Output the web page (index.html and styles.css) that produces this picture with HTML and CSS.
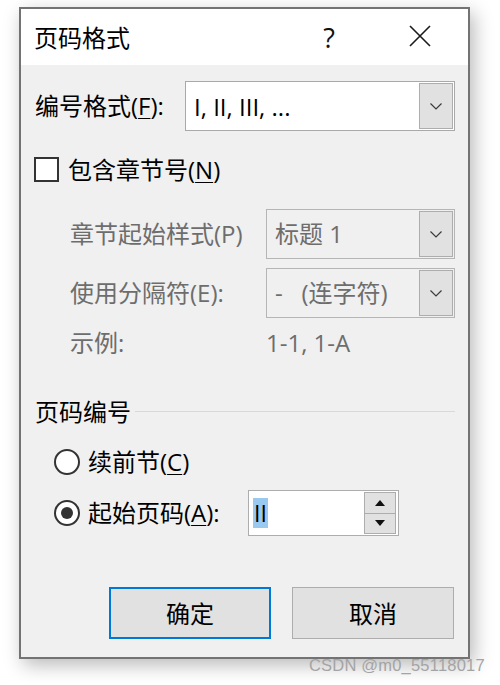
FILE: index.html
```html
<!DOCTYPE html>
<html lang="zh-CN">
<head>
<meta charset="utf-8">
<title>页码格式</title>
<link rel="stylesheet" href="styles.css">
</head>
<body>
<div class="dialog">
  <div class="titlebar">
    <span class="title">页码格式</span>
    <span class="help">?</span>
    <svg class="close" width="22" height="22" viewBox="0 0 22 22"><path d="M1 1 L21 21 M21 1 L1 21" stroke="#1a1a1a" stroke-width="1.6" fill="none"/></svg>
  </div>
  <div class="body">
    <div class="row row-format">
      <span class="label">编号格式(<u>F</u>):</span>
      <div class="select select-format">
        <span class="select-text">I, II, III, ...</span>
        <span class="select-btn"><svg width="12" height="7" viewBox="0 0 12 7"><path d="M0.5 0.5 L6 6 L11.5 0.5" stroke="#3a3a3a" stroke-width="1.2" fill="none"/></svg></span>
      </div>
    </div>
    <div class="row row-check">
      <span class="checkbox"></span>
      <span class="label">包含章节号(<u>N</u>)</span>
    </div>
    <div class="row row-sub row-style">
      <span class="label disabled">章节起始样式(P)</span>
      <div class="select select-sub">
        <span class="select-text disabled">标题 1</span>
        <span class="select-btn"><svg width="12" height="7" viewBox="0 0 12 7"><path d="M0.5 0.5 L6 6 L11.5 0.5" stroke="#3a3a3a" stroke-width="1.2" fill="none"/></svg></span>
      </div>
    </div>
    <div class="row row-sub row-sep">
      <span class="label disabled">使用分隔符(E):</span>
      <div class="select select-sub">
        <span class="select-text disabled">-&nbsp;&nbsp;&nbsp;(连字符)</span>
        <span class="select-btn"><svg width="12" height="7" viewBox="0 0 12 7"><path d="M0.5 0.5 L6 6 L11.5 0.5" stroke="#3a3a3a" stroke-width="1.2" fill="none"/></svg></span>
      </div>
    </div>
    <div class="row row-sub row-example">
      <span class="label example-label disabled">示例:</span>
      <span class="example disabled">1-1, 1-A</span>
    </div>
    <div class="row row-group">
      <span class="label">页码编号</span>
      <span class="group-line"></span>
    </div>
    <div class="row row-radio row-radio1">
      <span class="radio"></span>
      <span class="label">续前节(<u>C</u>)</span>
    </div>
    <div class="row row-radio row-radio2">
      <span class="radio checked"></span>
      <span class="label start-label">起始页码(<u>A</u>):</span>
      <div class="spin">
        <span class="spin-text"><span class="sel">II</span></span>
        <div class="spin-btns">
          <span class="spin-btn"><svg width="10" height="6" viewBox="0 0 10 6"><path d="M5 0 L10 6 L0 6 Z" fill="#111"/></svg></span>
          <span class="spin-btn"><svg width="10" height="6" viewBox="0 0 10 6"><path d="M0 0 L10 0 L5 6 Z" fill="#111"/></svg></span>
        </div>
      </div>
    </div>
    <div class="row row-buttons">
      <button class="btn btn-default">确定</button>
      <button class="btn">取消</button>
    </div>
  </div>
</div>
<div class="watermark">CSDN @m0_55118017</div>
</body>
</html>
```
FILE: styles.css
```css
html, body {
  margin: 0;
  padding: 0;
  background: #ffffff;
}
body {
  width: 500px;
  height: 685px;
  position: relative;
  overflow: hidden;
  font-family: "Open Sans", "Noto Sans CJK SC", sans-serif;
  font-size: 24px;
  color: #000;
}
.dialog {
  margin: 7px 0 0 19px;
  width: 451px;
  height: 652px;
  box-sizing: border-box;
  border: 2px solid #737373;
  background: #f0f0f0;
  box-shadow: 4px 6px 18px rgba(0,0,0,0.28);
  display: flex;
  flex-direction: column;
}
.titlebar {
  height: 56px;
  background: #fff;
  display: flex;
  align-items: center;
  padding-left: 13px;
  flex-shrink: 0;
}
.title {
  font-size: 24px;
  line-height: 1;
  margin-top: 1px;
}
.help {
  font-family: "Open Sans", sans-serif;
  font-size: 27px;
  line-height: 1;
  margin-left: auto;
  color: #111;
  margin-top: 1px;
}
.close {
  margin-left: 74px;
  margin-right: 37px;
  margin-top: -2px;
}
.body {
  display: flex;
  flex-direction: column;
  padding: 0 13px 0 13px;
}
.row {
  display: flex;
  align-items: center;
}
.label {
  line-height: 1;
  white-space: nowrap;
}
u {
  text-decoration-thickness: 1px;
  text-underline-offset: 3px;
}
.disabled {
  color: #6d6d6d;
}
.row-format {
  margin-top: 16px;
  height: 50px;
  padding-left: 1px;
}
.select {
  box-sizing: border-box;
  height: 50px;
  border: 1px solid #a9a9a9;
  background: #fff;
  display: flex;
  align-items: center;
  padding: 1px;
  margin-left: auto;
}
.select-format {
  width: 270px;
}
.select-text {
  flex: 1;
  padding-left: 7px;
  line-height: 1;
  white-space: nowrap;
}
.select-format .select-text {
  margin-top: 1px;
}
.select-btn {
  width: 34px;
  height: 46px;
  box-sizing: border-box;
  border: 1px solid #adadad;
  background: #e1e1e1;
  display: flex;
  align-items: center;
  justify-content: center;
}
.row-check {
  margin-top: 26px;
  height: 26px;
}
.checkbox {
  width: 25px;
  height: 25px;
  box-sizing: border-box;
  border: 2px solid #333;
  background: #fff;
  margin-right: 9px;
  margin-top: -2px;
}
.row-sub {
  padding-left: 36px;
}
.row-style {
  margin-top: 26px;
  height: 50px;
}
.row-sep {
  margin-top: 9px;
  height: 50px;
}
.select-sub {
  width: 189px;
  background: #f0f0f0;
  border-color: #b5b5b5;
}
.select-sub .select-text {
  padding-left: 7px;
}
.row-example {
  margin-top: 10px;
  height: 30px;
}
.example-label {
  width: 196px;
}
.example {
  line-height: 1;
}
.row-group {
  margin-top: 39px;
  height: 30px;
  padding-left: 1px;
}
.group-line {
  flex: 1;
  height: 1px;
  background: #d9d9d9;
  margin-left: 4px;
  margin-top: -2px;
}
.row-radio {
  padding-left: 20px;
}
.row-radio1 {
  margin-top: 22px;
  height: 26px;
}
.row-radio2 {
  margin-top: 15px;
  height: 46px;
}
.radio {
  width: 26px;
  height: 26px;
  box-sizing: border-box;
  border: 2px solid #333;
  border-radius: 50%;
  background: #fff;
  margin-right: 8px;
  display: flex;
  align-items: center;
  justify-content: center;
  flex-shrink: 0;
}
.radio.checked::after {
  content: "";
  width: 12px;
  height: 12px;
  border-radius: 50%;
  background: #333;
}
.start-label {
  width: 160px;
}
.spin {
  width: 151px;
  height: 46px;
  box-sizing: border-box;
  border: 1px solid #adadad;
  background: #fff;
  display: flex;
  padding: 1px 2px 1px 4px;
}
.spin-text {
  flex: 1;
  display: flex;
  align-items: center;
}
.sel {
  background: #99c9ef;
  font-size: 23px;
  line-height: 30px;
  height: 30px;
  padding: 0 1px;
}
.spin-btns {
  width: 32px;
  display: flex;
  flex-direction: column;
}
.spin-btn {
  flex: 1;
  box-sizing: border-box;
  border: 1px solid #adadad;
  background: #e1e1e1;
  display: flex;
  align-items: center;
  justify-content: center;
}
.spin-btn + .spin-btn {
  border-top: none;
}
.row-buttons {
  margin-top: 51px;
  justify-content: flex-end;
  gap: 21px;
  padding-right: 1px;
}
.btn {
  width: 162px;
  height: 52px;
  box-sizing: border-box;
  border: 1px solid #adadad;
  background: #e1e1e1;
  font-family: "Noto Sans CJK SC", sans-serif;
  font-size: 24px;
  color: #000;
  padding: 0;
  line-height: 1;
}
.btn-default {
  border: 2px solid #0078d7;
}
.watermark {
  position: absolute;
  left: 309px;
  top: 656px;
  font-family: "Liberation Sans", sans-serif;
  font-size: 16.5px;
  color: #a4a4a4;
  letter-spacing: 0.2px;
}
```
